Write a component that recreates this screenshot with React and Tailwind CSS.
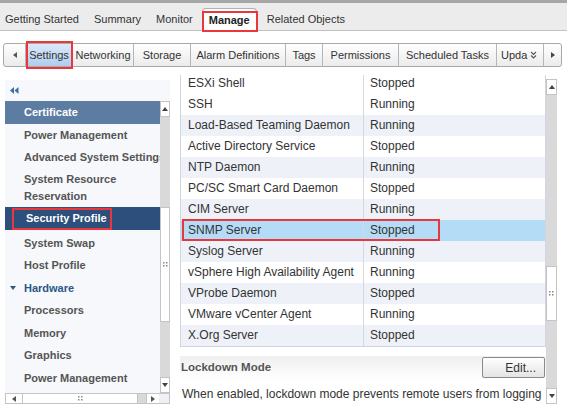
import React from 'react';

const topTabs = ['Getting Started', 'Summary', 'Monitor', 'Manage', 'Related Objects'];
const subTabs = [
  ['Settings', 47],
  ['Networking', 61],
  ['Storage', 57],
  ['Alarm Definitions', 95],
  ['Tags', 37],
  ['Permissions', 76],
  ['Scheduled Tasks', 98],
];

const services = [
  ['ESXi Shell', 'Stopped', false],
  ['SSH', 'Running', false],
  ['Load-Based Teaming Daemon', 'Running', true],
  ['Active Directory Service', 'Stopped', false],
  ['NTP Daemon', 'Running', true],
  ['PC/SC Smart Card Daemon', 'Stopped', false],
  ['CIM Server', 'Running', true],
  ['SNMP Server', 'Stopped', 'sel'],
  ['Syslog Server', 'Running', true],
  ['vSphere High Availability Agent', 'Running', false],
  ['VProbe Daemon', 'Stopped', true],
  ['VMware vCenter Agent', 'Running', false],
  ['X.Org Server', 'Stopped', true],
];

function Grip() {
  return (
    <svg width="5" height="5" viewBox="0 0 5 5">
      <rect x="0" y="0" width="1.5" height="1.5" fill="#888" />
      <rect x="3" y="0" width="1.5" height="1.5" fill="#888" />
      <rect x="0" y="3" width="1.5" height="1.5" fill="#888" />
      <rect x="3" y="3" width="1.5" height="1.5" fill="#888" />
    </svg>
  );
}

function Arrow({ dir, color = '#444' }) {
  const pts = {
    up: '0,4 3,0 6,4',
    down: '0,0 6,0 3,4',
    left: '4,0 4,6 0,3',
    right: '0,0 0,6 4,3',
  }[dir];
  const w = dir === 'up' || dir === 'down' ? 6 : 4;
  const h = dir === 'up' || dir === 'down' ? 4 : 6;
  return (
    <svg width={w} height={h} viewBox={`0 0 ${w} ${h}`}>
      <polygon points={pts} fill={color} />
    </svg>
  );
}

function VScroll({ segs }) {
  return (
    <div className="flex flex-col w-full h-full">
      <div className="h-[16px] bg-white border border-[#c4c4c4] flex items-center justify-center">
        <Arrow dir="up" />
      </div>
      {segs.map((s, i) =>
        s.thumb ? (
          <div key={i} style={{ height: s.h }} className="bg-white border border-[#c4c4c4] flex items-center justify-center">
            <Grip />
          </div>
        ) : (
          <div key={i} style={{ height: s.h }} className="bg-[#d9d9d9]" />
        )
      )}
      <div className="flex-1 bg-[#d9d9d9]" />
      <div className="h-[16px] bg-white border border-[#c4c4c4] flex items-center justify-center">
        <Arrow dir="down" />
      </div>
    </div>
  );
}

export default function App() {
  return (
    <div
      className="w-[567px] h-[404px] overflow-hidden bg-white flex flex-col text-[#333]"
      style={{ fontFamily: '"Liberation Sans", Arial, sans-serif' }}
    >
      {/* top tabs */}
      <div className="h-[3px] bg-[#a6a6a6]" />
      <div className="h-[28px] bg-[#ececec] border-b border-[#c2c2c2] flex items-end text-[11px] pl-[5px]">
        {topTabs.map((t) =>
          t === 'Manage' ? (
            <div
              key={t}
              className="relative h-[23px] mb-[-1px] ml-[-6px] mr-[10px] px-[6px] bg-white border border-[#b0b0b0] border-b-0 rounded-t-[4px] flex items-center font-bold text-[#222]"
            >
              {t}
              <div className="absolute left-[-1px] right-[-2px] top-[2px] bottom-[-1px] border-2 border-[#e8383d]" />
            </div>
          ) : (
            <div key={t} className="h-[22px] flex items-center mr-[15px]">
              {t}
            </div>
          )
        )}
      </div>

      {/* sub tabs */}
      <div className="mt-[12px] ml-[3px] mr-[5px] h-[24px] flex border border-[#a9a9a9] rounded-[3px] bg-gradient-to-b from-white to-[#ebebeb] text-[11px]">
        <div className="w-[21px] flex items-center justify-center">
          <Arrow dir="left" color="#555" />
        </div>
        {subTabs.map(([t, w]) =>
          t === 'Settings' ? (
            <div
              key={t}
              style={{ width: w }}
              className="relative flex items-center justify-center border-l border-[#b5b5b5] bg-gradient-to-b from-[#dbe9f8] to-[#aecdf0]"
            >
              {t}
              <div className="absolute left-0 right-[-1px] top-[-3px] bottom-[-3px] border-2 border-[#e8383d]" />
            </div>
          ) : (
            <div key={t} style={{ width: w }} className="flex items-center justify-center border-l border-[#b5b5b5]">
              {t}
            </div>
          )
        )}
        <div className="w-[47px] pl-[4px] flex items-center border-l border-[#b5b5b5] gap-[3px]">
          Upda
          <svg width="7" height="8" viewBox="0 0 7 8">
            <path d="M1 1 L3.5 3.5 L6 1 M1 4.5 L3.5 7 L6 4.5" stroke="#555" strokeWidth="1.1" fill="none" />
          </svg>
        </div>
        <div className="flex-1 flex items-center justify-center border-l border-[#b5b5b5]">
          <Arrow dir="right" color="#444" />
        </div>
      </div>

      {/* main */}
      <div className="mt-[8px] flex flex-1 min-h-0">
        {/* left nav */}
        <div className="ml-[5px] mt-[5px] w-[165px] flex flex-col">
          <div className="h-[21px] bg-[#f6f8fb] flex items-center pl-[5px]">
            <svg width="9" height="7" viewBox="0 0 9 7">
              <polygon points="4,0 4,7 0,3.5" fill="#3b6fa6" />
              <polygon points="8.5,0 8.5,7 4.5,3.5" fill="#3b6fa6" />
            </svg>
          </div>
          <div className="flex flex-1 min-h-0">
            <div className="w-[155px] bg-[#f6f8fb] flex flex-col text-[11px] font-bold text-[#555] overflow-hidden whitespace-nowrap">
              <div className="h-[23px] bg-[#5d7ca1] text-white flex items-center pl-[19px]">Certificate</div>
              <div className="h-[22px] flex items-center pl-[19px]">Power Management</div>
              <div className="h-[22px] flex items-center pl-[19px]">Advanced System Settings</div>
              <div className="h-[39px] flex flex-col justify-center pl-[19px] leading-[17px]">
                <span>System Resource</span>
                <span>Reservation</span>
              </div>
              <div className="h-[23px] bg-[#2c4f7b] text-white flex items-center pl-[7px]">
                <span className="h-[22px] w-[100px] flex items-center pl-[12px] border-2 border-[#e8383d]">Security Profile</span>
              </div>
              <div className="h-[1.5px]" />
              <div className="h-[22.5px] flex items-center pl-[19px]">System Swap</div>
              <div className="h-[22.5px] flex items-center pl-[19px]">Host Profile</div>
              <div className="h-[22.5px] flex items-center pl-[5px] text-[#2b5787] gap-[5px]">
                <Arrow dir="down" color="#2b5787" />
                <span className="pl-[3px]">Hardware</span>
              </div>
              <div className="h-[22.5px] flex items-center pl-[19px]">Processors</div>
              <div className="h-[22.5px] flex items-center pl-[19px]">Memory</div>
              <div className="h-[22.5px] flex items-center pl-[19px]">Graphics</div>
              <div className="h-[22.5px] flex items-center pl-[19px]">Power Management</div>
            </div>
            <div className="w-[10px]">
              <VScroll segs={[{ h: 90 }, { h: 115, thumb: true }]} />
            </div>
          </div>
          <div className="h-[11px] flex border border-[#c4c4c4] bg-[#d9d9d9]">
            <div className="w-[17px] bg-white border-r border-[#c4c4c4] flex items-center justify-center">
              <Arrow dir="left" color="#555" />
            </div>
            <div className="w-[115px] bg-white border-r border-[#c4c4c4] flex items-center justify-center">
              <Grip />
            </div>
            <div className="flex-1" />
            <div className="w-[13px] bg-white border-l border-[#c4c4c4] flex items-center justify-center">
              <Arrow dir="right" color="#555" />
            </div>
            <div className="w-[10px] bg-[#eef2f7]" />
          </div>
        </div>

        {/* right panel */}
        <div className="ml-[10px] w-[377px] flex min-h-0">
          <div className="w-[366px] overflow-hidden">
            <div className="mt-[-3.5px] border border-[#cfd6df] text-[12px]">
              {services.map(([name, status, alt]) => (
                <div
                  key={name}
                  className={
                    'relative h-[21px] grid grid-cols-[183px_1fr] ' +
                    (alt === 'sel' ? 'bg-[#b5dcf7]' : alt ? 'bg-[#eef2f8]' : 'bg-white')
                  }
                >
                  <div className="flex items-center pl-[7px] border-r border-[#d3d9e1]">{name}</div>
                  <div className="flex items-center pl-[6px]">{status}</div>
                  {alt === 'sel' && (
                    <div className="absolute left-[1px] top-[-1px] w-[258px] h-[22px] border-2 border-[#e8383d]" />
                  )}
                </div>
              ))}
            </div>
            <div className="mt-[9px] h-[24px] bg-gradient-to-b from-[#efefef] to-white flex items-center justify-between">
              <span className="text-[11.5px] font-bold text-[#555] pl-[1px]">Lockdown Mode</span>
              <div className="h-[21px] w-[63px] mr-[1px] border border-[#8a8a8a] rounded-[2px] bg-gradient-to-b from-white to-[#e4e4e4] flex items-center justify-end pr-[8px] text-[12px] text-[#333]">
                Edit...
              </div>
            </div>
            <div className="mt-[5px] pl-[2px] text-[12px] whitespace-nowrap">
              When enabled, lockdown mode prevents remote users from logging
            </div>
          </div>
          <div className="w-[11px] pt-[4px]">
            <VScroll segs={[{ h: 171 }, { h: 55, thumb: true }]} />
          </div>
        </div>
      </div>
    </div>
  );
}
